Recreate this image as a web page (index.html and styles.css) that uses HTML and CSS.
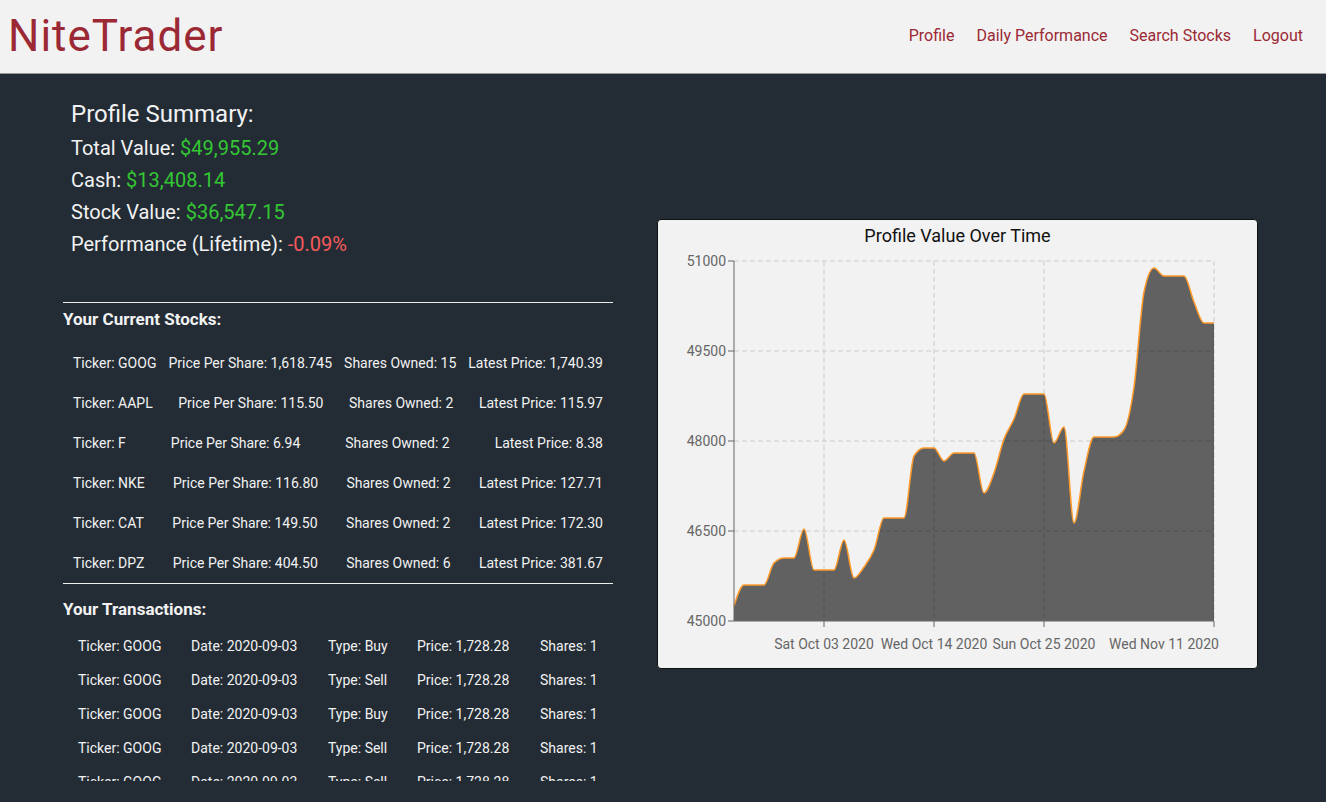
FILE: index.html
```html
<!DOCTYPE html>
<html lang="en">
<head>
<meta charset="utf-8">
<title>NiteTrader</title>
<link rel="stylesheet" href="styles.css">
</head>
<body>
<header class="topbar">
  <div class="logo">NiteTrader</div>
  <nav class="nav">
    <a class="nav-link" href="#">Profile</a>
    <a class="nav-link" href="#">Daily Performance</a>
    <a class="nav-link" href="#">Search Stocks</a>
    <a class="nav-link" href="#">Logout</a>
  </nav>
</header>
<main class="page">
  <section class="left">
    <div class="summary">
      <h2 class="summary-title">Profile Summary:</h2>
      <p class="stat">Total Value: <span class="pos">$49,955.29</span></p>
      <p class="stat">Cash: <span class="pos">$13,408.14</span></p>
      <p class="stat">Stock Value: <span class="pos">$36,547.15</span></p>
      <p class="stat">Performance (Lifetime): <span class="neg">-0.09%</span></p>
    </div>
    <hr class="rule">
    <h3 class="section-title">Your Current Stocks:</h3>
    <ul class="stocks">
      <li class="stock-row"><span>Ticker: GOOG</span><span>Price Per Share: 1,618.745</span><span>Shares Owned: 15</span><span>Latest Price: 1,740.39</span></li>
      <li class="stock-row"><span>Ticker: AAPL</span><span>Price Per Share: 115.50</span><span>Shares Owned: 2</span><span>Latest Price: 115.97</span></li>
      <li class="stock-row"><span>Ticker: F</span><span>Price Per Share: 6.94</span><span>Shares Owned: 2</span><span>Latest Price: 8.38</span></li>
      <li class="stock-row"><span>Ticker: NKE</span><span>Price Per Share: 116.80</span><span>Shares Owned: 2</span><span>Latest Price: 127.71</span></li>
      <li class="stock-row"><span>Ticker: CAT</span><span>Price Per Share: 149.50</span><span>Shares Owned: 2</span><span>Latest Price: 172.30</span></li>
      <li class="stock-row"><span>Ticker: DPZ</span><span>Price Per Share: 404.50</span><span>Shares Owned: 6</span><span>Latest Price: 381.67</span></li>
    </ul>
    <hr class="rule">
    <h3 class="section-title tx-title">Your Transactions:</h3>
    <div class="tx-list">
      <div class="tx-row"><span>Ticker: GOOG</span><span>Date: 2020-09-03</span><span>Type: Buy</span><span>Price: 1,728.28</span><span>Shares: 1</span></div>
      <div class="tx-row"><span>Ticker: GOOG</span><span>Date: 2020-09-03</span><span>Type: Sell</span><span>Price: 1,728.28</span><span>Shares: 1</span></div>
      <div class="tx-row"><span>Ticker: GOOG</span><span>Date: 2020-09-03</span><span>Type: Buy</span><span>Price: 1,728.28</span><span>Shares: 1</span></div>
      <div class="tx-row"><span>Ticker: GOOG</span><span>Date: 2020-09-03</span><span>Type: Sell</span><span>Price: 1,728.28</span><span>Shares: 1</span></div>
      <div class="tx-row"><span>Ticker: GOOG</span><span>Date: 2020-09-03</span><span>Type: Sell</span><span>Price: 1,728.28</span><span>Shares: 1</span></div>
      <div class="tx-row"><span>Ticker: GOOG</span><span>Date: 2020-09-03</span><span>Type: Buy</span><span>Price: 1,728.28</span><span>Shares: 1</span></div>
    </div>
  </section>
  <section class="chart-card">
    <div class="chart-title">Profile Value Over Time</div>
    <svg class="chart" width="598" height="415" viewBox="0 0 598 415">
      <g class="grid">
        <line x1="76" y1="9" x2="556" y2="9"/>
        <line x1="76" y1="99" x2="556" y2="99"/>
        <line x1="76" y1="189" x2="556" y2="189"/>
        <line x1="76" y1="279" x2="556" y2="279"/>
        <line x1="166" y1="9" x2="166" y2="369"/>
        <line x1="276" y1="9" x2="276" y2="369"/>
        <line x1="386" y1="9" x2="386" y2="369"/>
        <line x1="556" y1="9" x2="556" y2="369"/>
      </g>
      <path id="area" class="area" d=""/>
      <path id="line" class="line" d=""/>
      <g class="axis">
        <line x1="76" y1="9" x2="76" y2="369"/>
        <line x1="76" y1="369" x2="556" y2="369"/>
        <line x1="70" y1="9" x2="76" y2="9"/>
        <line x1="70" y1="99" x2="76" y2="99"/>
        <line x1="70" y1="189" x2="76" y2="189"/>
        <line x1="70" y1="279" x2="76" y2="279"/>
        <line x1="70" y1="369" x2="76" y2="369"/>
        <line x1="166" y1="369" x2="166" y2="375"/>
        <line x1="276" y1="369" x2="276" y2="375"/>
        <line x1="386" y1="369" x2="386" y2="375"/>
        <line x1="556" y1="369" x2="556" y2="375"/>
      </g>
      <g class="ylabels">
        <text x="68" y="14">51000</text>
        <text x="68" y="104">49500</text>
        <text x="68" y="194">48000</text>
        <text x="68" y="284">46500</text>
        <text x="68" y="374">45000</text>
      </g>
      <g class="xlabels">
        <text x="166" y="397">Sat Oct 03 2020</text>
        <text x="276" y="397">Wed Oct 14 2020</text>
        <text x="386" y="397">Sun Oct 25 2020</text>
        <text x="506" y="397">Wed Nov 11 2020</text>
      </g>
    </svg>
  </section>
</main>
<script src="chart.js"></script>
</body>
</html>
```

FILE: styles.css
```css
* { box-sizing: border-box; }
html, body {
  margin: 0;
  padding: 0;
}
body {
  background: #232c35;
  font-family: Roboto, "Liberation Sans", Arial, sans-serif;
  color: #f2f2f2;
  height: 802px;
  overflow: hidden;
}
.topbar {
  height: 74px;
  background: #f2f2f2;
  border-bottom: 1px solid #9a9a9a;
  display: flex;
  align-items: center;
  justify-content: space-between;
  padding: 0 13px 0 8px;
}
.logo {
  font-family: Roboto, "Liberation Sans", sans-serif;
  font-size: 44px;
  color: #9b2935;
  letter-spacing: 1px;
  line-height: 1;
  margin-top: -1px;
}
.nav {
  display: flex;
  align-items: center;
  margin-top: -2px;
}
.nav-link {
  color: #9b2935;
  text-decoration: none;
  font-size: 16px;
  padding: 0 10px 0 12px;
}
.page {
  display: flex;
  align-items: flex-start;
  padding-left: 63px;
  gap: 44px;
}
.left {
  width: 550px;
  flex: none;
  padding-top: 24px;
}
.summary {
  padding-left: 8px;
  height: 204px;
}
.summary-title {
  margin: 0 0 2px;
  font-size: 24px;
  font-weight: 400;
  line-height: 32px;
}
.stat {
  margin: 0;
  font-size: 20px;
  line-height: 32px;
}
.pos { color: #33c733; }
.neg { color: #f55a5a; }
.rule {
  border: 0;
  border-top: 1px solid #eeeeee;
  margin: 0;
  height: 0;
}
.section-title {
  margin: 6px 0 14px;
  font-size: 17px;
  font-weight: 700;
  line-height: 20px;
}
.stocks {
  list-style: none;
  margin: 0;
  padding: 0;
}
.stock-row {
  display: flex;
  justify-content: space-between;
  align-items: center;
  height: 40px;
  padding: 0 10px;
  font-size: 14px;
}
.tx-title {
  margin: 15px 0 10px;
}
.tx-list {
  height: 152px;
  overflow: hidden;
}
.tx-row {
  display: grid;
  grid-template-columns: 113px 137px 89px 123px auto;
  align-items: center;
  height: 34px;
  padding-left: 15px;
  font-size: 14px;
}
.chart-card {
  flex: none;
  margin-top: 145px;
  width: 601px;
  height: 450px;
  background: #f2f2f2;
  border: 1px solid #111;
  border-radius: 4px;
}
.chart-title {
  height: 32px;
  line-height: 32px;
  text-align: center;
  color: #111;
  font-size: 18px;
}
.chart {
  display: block;
}
.grid line {
  stroke: #cccccc;
  stroke-width: 1;
  stroke-dasharray: 5 3;
}
.area {
  fill: #000;
  fill-opacity: 0.6;
}
.line {
  fill: none;
  stroke: #ff9a2a;
  stroke-width: 1.5;
}
.axis line {
  stroke: #666;
  stroke-width: 1;
}
.ylabels text {
  font-family: Roboto, sans-serif;
  font-size: 14px;
  fill: #666;
  text-anchor: end;
}
.xlabels text {
  font-family: Roboto, sans-serif;
  font-size: 14px;
  fill: #666;
  text-anchor: middle;
}
```

FILE: chart.js
```js
(function () {
  var ys = [354,333,333,333,311,306,306,277,318,318,318,288,326,315,298,266,266,266,204,196,196,209,201,201,201,241,221,187,167,142,142,142,191,175,271,219,185,185,185,178,135,40,16,24,24,24,50,71,71];
  var xs = ys.map(function (_, i) { return 76 + 10 * i; });
  function sign(x) { return x < 0 ? -1 : 1; }
  function slope3(i) {
    var h0 = xs[i] - xs[i - 1], h1 = xs[i + 1] - xs[i];
    var s0 = (ys[i] - ys[i - 1]) / h0, s1 = (ys[i + 1] - ys[i]) / h1;
    var p = (s0 * h1 + s1 * h0) / (h0 + h1);
    return (sign(s0) + sign(s1)) * Math.min(Math.abs(s0), Math.abs(s1), 0.5 * Math.abs(p)) || 0;
  }
  var n = ys.length, t = new Array(n);
  for (var i = 1; i < n - 1; i++) t[i] = slope3(i);
  t[0] = (3 * (ys[1] - ys[0]) / (xs[1] - xs[0]) - t[1]) / 2;
  t[n - 1] = (3 * (ys[n - 1] - ys[n - 2]) / (xs[n - 1] - xs[n - 2]) - t[n - 2]) / 2;
  var d = 'M' + xs[0] + ',' + ys[0];
  for (var j = 0; j < n - 1; j++) {
    var dx = (xs[j + 1] - xs[j]) / 3;
    d += 'C' + (xs[j] + dx) + ',' + (ys[j] + dx * t[j]) + ',' + (xs[j + 1] - dx) + ',' + (ys[j + 1] - dx * t[j + 1]) + ',' + xs[j + 1] + ',' + ys[j + 1];
  }
  document.getElementById('line').setAttribute('d', d);
  document.getElementById('area').setAttribute('d', d + 'L556,369L76,369Z');
})();
```
